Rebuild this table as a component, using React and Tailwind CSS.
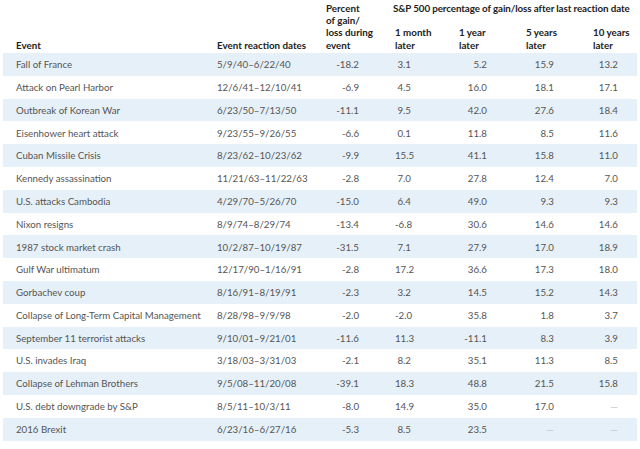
import React from 'react';

const rows = [
  ['Fall of France', '5/9/40–6/22/40', '-18.2', '3.1', '5.2', '15.9', '13.2'],
  ['Attack on Pearl Harbor', '12/6/41–12/10/41', '-6.9', '4.5', '16.0', '18.1', '17.1'],
  ['Outbreak of Korean War', '6/23/50–7/13/50', '-11.1', '9.5', '42.0', '27.6', '18.4'],
  ['Eisenhower heart attack', '9/23/55–9/26/55', '-6.6', '0.1', '11.8', '8.5', '11.6'],
  ['Cuban Missile Crisis', '8/23/62–10/23/62', '-9.9', '15.5', '41.1', '15.8', '11.0'],
  ['Kennedy assassination', '11/21/63–11/22/63', '-2.8', '7.0', '27.8', '12.4', '7.0'],
  ['U.S. attacks Cambodia', '4/29/70–5/26/70', '-15.0', '6.4', '49.0', '9.3', '9.3'],
  ['Nixon resigns', '8/9/74–8/29/74', '-13.4', '-6.8', '30.6', '14.6', '14.6'],
  ['1987 stock market crash', '10/2/87–10/19/87', '-31.5', '7.1', '27.9', '17.0', '18.9'],
  ['Gulf War ultimatum', '12/17/90–1/16/91', '-2.8', '17.2', '36.6', '17.3', '18.0'],
  ['Gorbachev coup', '8/16/91–8/19/91', '-2.3', '3.2', '14.5', '15.2', '14.3'],
  ['Collapse of Long-Term Capital Management', '8/28/98–9/9/98', '-2.0', '-2.0', '35.8', '1.8', '3.7'],
  ['September 11 terrorist attacks', '9/10/01–9/21/01', '-11.6', '11.3', '-11.1', '8.3', '3.9'],
  ['U.S. invades Iraq', '3/18/03–3/31/03', '-2.1', '8.2', '35.1', '11.3', '8.5'],
  ['Collapse of Lehman Brothers', '9/5/08–11/20/08', '-39.1', '18.3', '48.8', '21.5', '15.8'],
  ['U.S. debt downgrade by S&P', '8/5/11–10/3/11', '-8.0', '14.9', '35.0', '17.0', null],
  ['2016 Brexit', '6/23/16–6/27/16', '-5.3', '8.5', '23.5', null, null],
];

// widths and right padding of the numeric columns
const numCols = [
  { w: 'w-[69px]', pr: 'pr-[36px]' },
  { w: 'w-[64px]', pr: 'pr-[48px]' },
  { w: 'w-[67px]', pr: 'pr-[39px]' },
  { w: 'w-[67px]', pr: 'pr-[39px]' },
  { w: 'w-[42px]', pr: 'pr-[17px]' },
];

const Value = ({ v }) =>
  v === null ? <span className="text-[#c4c4c4]">—</span> : v;

export default function App() {
  return (
    <div
      className="w-[640px] h-[449px] bg-white px-[3px] text-[9.7px] text-[#555]"
      style={{ fontFamily: 'Lato, "Noto Sans", sans-serif' }}
    >
      <div className="flex h-[53px] items-end font-bold text-[9.8px] text-[#222] leading-[12.3px] pb-[2px]">
        <div className="w-[214px] shrink-0 pl-[13px]">Event</div>
        <div className="w-[109px] shrink-0">Event reaction dates</div>
        <div className="w-[69px] shrink-0">
          Percent
          <br />
          of gain/
          <br />
          loss during
          <br />
          event
        </div>
        <div className="flex flex-col self-stretch justify-between pt-[2px] shrink-0">
          <div className="-ml-[2px] whitespace-nowrap tracking-[-0.1px]">S&amp;P 500 percentage of gain/loss after last reaction date</div>
          <div className="flex">
            <div className="w-[64px] shrink-0">1 month<br />later</div>
            <div className="w-[67px] shrink-0">1 year<br />later</div>
            <div className="w-[67px] shrink-0">5 years<br />later</div>
            <div className="w-[42px] shrink-0 whitespace-nowrap">10 years<br />later</div>
          </div>
        </div>
      </div>
      <div className="flex flex-col">
        {rows.map((r, i) => (
          <div
            key={r[0]}
            className={`flex items-center h-[22.8px] ${i % 2 === 0 ? 'bg-[#e6f0f8]' : 'bg-white'}`}
          >
            <div className="w-[214px] shrink-0 pl-[13px] whitespace-nowrap">{r[0]}</div>
            <div className="w-[109px] shrink-0 whitespace-nowrap">{r[1]}</div>
            {numCols.map((c, j) => (
              <div key={j} className={`${c.w} ${c.pr} shrink-0 text-right`}>
                <Value v={r[j + 2]} />
              </div>
            ))}
          </div>
        ))}
      </div>
    </div>
  );
}
